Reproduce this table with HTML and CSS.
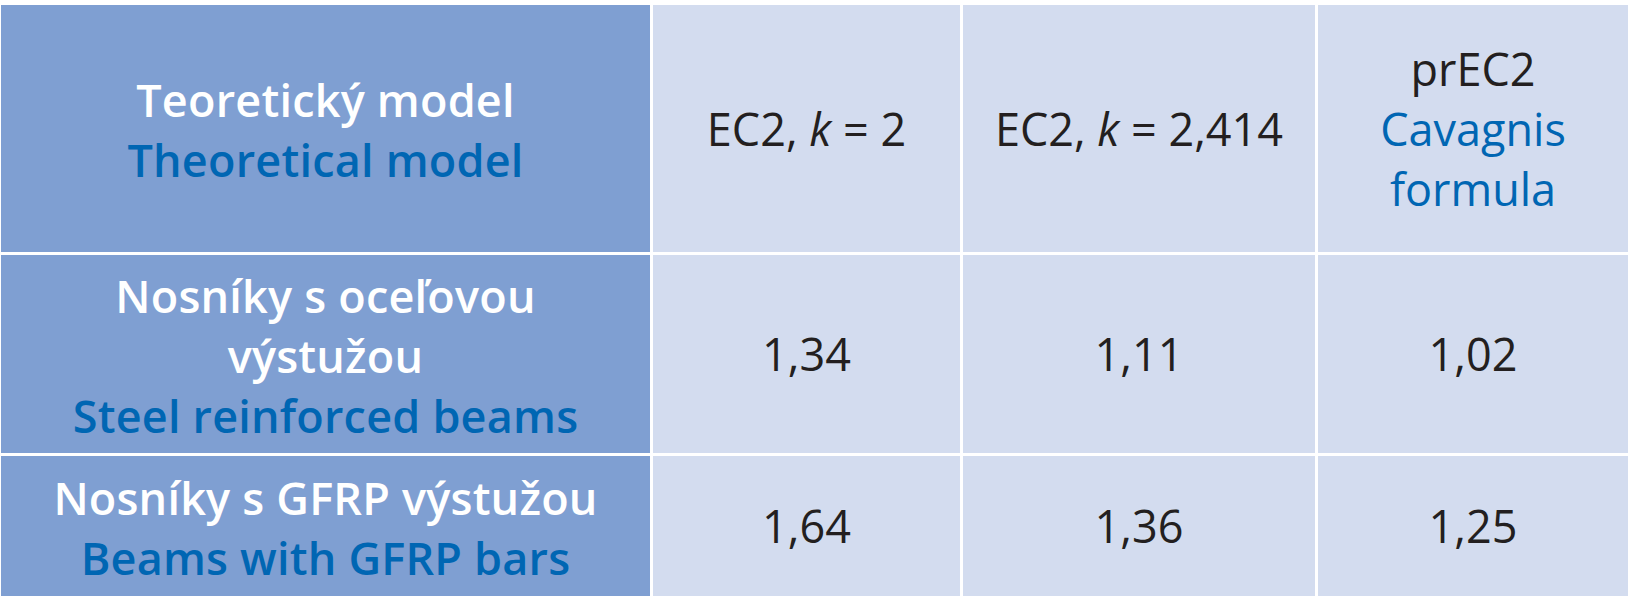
FILE: index.html
```html
<!DOCTYPE html>
<html lang="cs">
<head>
<meta charset="utf-8">
<title>Tabulka</title>
<link rel="stylesheet" href="styles.css">
</head>
<body>
<div class="table">
  <div class="cell head">
    <span class="cz">Teoretický model</span>
    <span class="en">Theoretical model</span>
  </div>
  <div class="cell data"><span>EC2, <i>k</i> = 2</span></div>
  <div class="cell data"><span>EC2, <i>k</i> = 2,414</span></div>
  <div class="cell data">
    <span>prEC2</span>
    <span class="en-light">Cavagnis</span>
    <span class="en-light">formula</span>
  </div>

  <div class="cell head">
    <span class="cz">Nosníky s oceľovou</span>
    <span class="cz">výstužou</span>
    <span class="en">Steel reinforced beams</span>
  </div>
  <div class="cell data"><span>1,34</span></div>
  <div class="cell data"><span>1,11</span></div>
  <div class="cell data"><span>1,02</span></div>

  <div class="cell head">
    <span class="cz">Nosníky s GFRP výstužou</span>
    <span class="en">Beams with GFRP bars</span>
  </div>
  <div class="cell data"><span>1,64</span></div>
  <div class="cell data"><span>1,36</span></div>
  <div class="cell data"><span>1,25</span></div>
</div>
</body>
</html>
```
FILE: styles.css
```css
html, body {
  margin: 0;
  padding: 0;
  background: #ffffff;
}
body {
  width: 1634px;
  height: 599px;
  overflow: hidden;
}
.table {
  display: grid;
  grid-template-columns: 649px 307px 352px 310px;
  grid-template-rows: 247px 198px 140px;
  gap: 3px;
  padding: 5px 0 0 1px;
  font-family: "Open Sans", "Noto Sans", sans-serif;
  font-size: 45px;
  line-height: 60px;
}
.cell {
  display: flex;
  flex-direction: column;
  justify-content: center;
  align-items: center;
  text-align: center;
  white-space: nowrap;
}
.head {
  background: #7f9fd2;
  color: #ffffff;
  font-weight: 600;
  letter-spacing: 0.2px;
  padding-top: 3px;
}
.head .en {
  color: #0066b3;
}
.data {
  background: #d3dcef;
  color: #231f20;
  font-weight: 400;
}
.data i {
  font-style: italic;
}
.en-light {
  color: #0066b3;
}
```
